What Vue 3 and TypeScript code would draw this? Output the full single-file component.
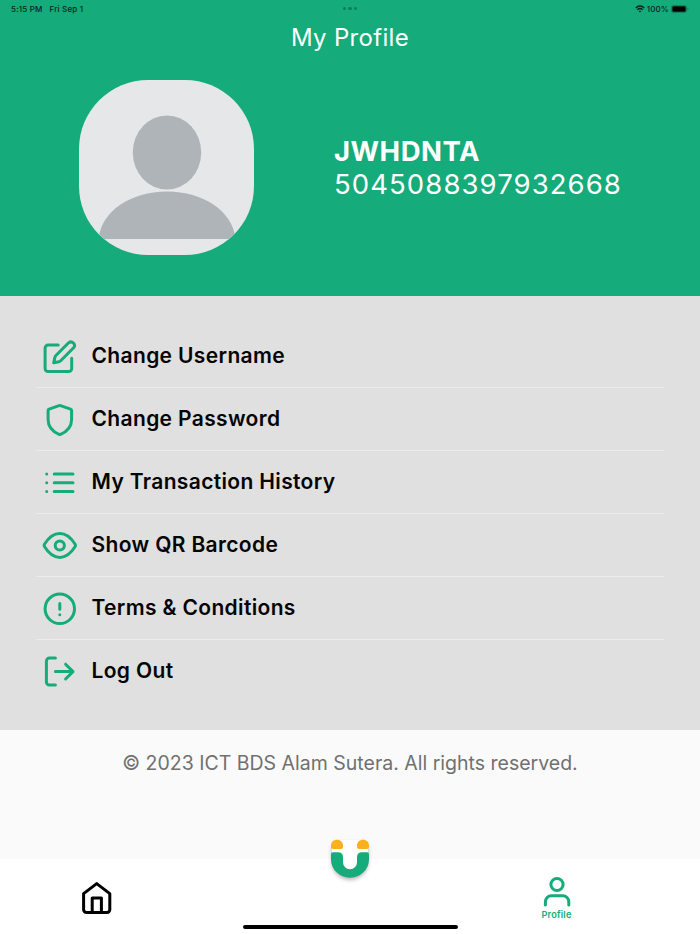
<script setup lang="ts">
interface MenuItem {
  label: string
  paths: string[]
}

const profile = { name: 'JWHDNTA', id: '5045088397932668' }

const menu: MenuItem[] = [
  {
    label: 'Change Username',
    paths: [
      'M16.2 6.1H6.1a3 3 0 0 0-3 3v20.5a3 3 0 0 0 3 3h20.6a3 3 0 0 0 3-3V19.3',
      'M26.6 3.8a3.55 3.55 0 0 1 5 5L18.7 21.7Q18 22.4 17 22.7L11.7 23.8L12.9 18.4Q13.1 17.3 13.9 16.5Z',
    ],
  },
  {
    label: 'Change Password',
    paths: ['M17.1 3.6Q17.8 3.3 18.5 3.6L28.5 7.2Q29.6 7.6 29.6 8.6V17.5C29.6 25.5 24.5 29.8 18.5 32.4Q17.8 32.7 17.1 32.4C11.2 29.8 6.1 25.5 6.1 17.5V8.6Q6.1 7.6 7.1 7.2Z'],
  },
  {
    label: 'My Transaction History',
    paths: ['M4.7 9h.01M4.7 17.8h.01M4.7 26.5h.01', 'M12.2 9H31M12.2 17.8H31M12.2 26.5H31'],
  },
  {
    label: 'Show QR Barcode',
    paths: [
      'M2.6 18.8Q1.7 17.4 2.6 16C6.6 9.5 11.7 5.4 17.8 5.4S29 9.5 33 16Q33.9 17.4 33 18.8C29 25.3 23.9 29.4 17.8 29.4S6.6 25.3 2.6 18.8Z',
      'M13.2 17.5a4.6 4.6 0 1 0 9.2 0a4.6 4.6 0 1 0-9.2 0Z',
    ],
  },
  {
    label: 'Terms & Conditions',
    paths: ['M3.1 17.8a14.7 14.7 0 1 0 29.4 0a14.7 14.7 0 1 0-29.4 0Z', 'M17.8 12.4v5.9M17.8 23.8h.01'],
  },
  {
    label: 'Log Out',
    paths: ['M13.4 4.1H7.4a3 3 0 0 0-3 3V28a3 3 0 0 0 3 3H13.4', 'M13.4 17.6H30.8M23.6 10.2L31 17.6L23.6 25'],
  },
]
</script>

<template>
  <main class="screen">
    <header class="hero">
      <div class="status">
        <div class="status-left"><span>5:15 PM</span><span>Fri Sep 1</span></div>
        <div class="dots"><i /><i /><i /></div>
        <div class="status-right">
          <svg class="wifi" width="10" height="8" viewBox="0 0 10 8">
            <path d="M.7 2.9Q5-.9 9.3 2.9M2.3 4.7Q5 2.4 7.7 4.7" fill="none" stroke="#06251b" stroke-width="1.4" />
            <path d="M3.6 6Q5 4.9 6.4 6L5 7.5Z" fill="#06251b" />
          </svg>
          <span>100%</span>
          <svg class="battery" width="18" height="8" viewBox="0 0 18 8">
            <rect x=".4" y=".4" width="15.2" height="7.2" rx="2.2" fill="none" stroke="#0b7552" stroke-width=".8" />
            <rect x="1.3" y="1.3" width="13.4" height="5.4" rx="1.3" fill="#000" />
            <path d="M16.5 2.8v2.4q1-.3 1-1.2t-1-1.2Z" fill="#0b7552" />
          </svg>
        </div>
      </div>
      <h1 class="title">My Profile</h1>
      <section class="identity">
        <div class="avatar">
          <svg width="175" height="175" viewBox="0 0 175 175">
            <ellipse cx="88" cy="72.5" rx="34.2" ry="37" fill="#aeb4b8" />
            <path d="M19.6 159C22 131 52 111.4 88 111.4S154 131 156.4 159Z" fill="#aeb4b8" />
          </svg>
        </div>
        <div class="who">
          <div class="name">{{ profile.name }}</div>
          <div class="number">{{ profile.id }}</div>
        </div>
      </section>
    </header>

    <ul class="menu">
      <li v-for="item in menu" :key="item.label" class="row">
        <svg class="icon" width="36" height="36" viewBox="0 0 36 36">
          <path v-for="d in item.paths" :key="d" :d="d" />
        </svg>
        <span class="label">{{ item.label }}</span>
      </li>
    </ul>

    <footer class="legal">© 2023 ICT BDS Alam Sutera. All rights reserved.</footer>

    <nav class="tabs">
      <a class="tab">
        <svg class="home" width="34" height="36" viewBox="80 880 34 36">
          <path d="M83.6 893.6L96.7 883.6L109.8 893.6V909.6a2.8 2.8 0 0 1-2.8 2.8H86.4a2.8 2.8 0 0 1-2.8-2.8Z" />
          <path d="M92.2 912V898H101.4V912" />
        </svg>
      </a>
      <a class="tab">
        <svg class="logo" width="60" height="60" viewBox="320 830 60 60">
          <path class="backing" d="M337 840H363Q368 841 368 849V859A18 17.5 0 0 1 332 859V849Q332 841 337 840Z" />
          <path d="M331 845.4C331 842 333.6 839.7 337 839.7S343 842 343 845.4V847Q343 848.9 341 848.9H333Q331 848.9 331 847Z" fill="#fdb01e" />
          <path d="M357 845.4C357 842 359.6 839.7 363 839.7S369 842 369 845.4V847Q369 848.9 367 848.9H359Q357 848.9 357 847Z" fill="#fdb01e" />
          <path d="M331 854.3Q331 852.3 333 852.3H338Q343 852.3 343 857.3V862.3A7 7 0 0 0 357 862.3V857.3Q357 852.3 362 852.3H367Q369 852.3 369 854.3V859.5A19 18.2 0 0 1 331 859.5Z" fill="#16ab7a" />
        </svg>
      </a>
      <a class="tab active">
        <svg class="person" width="32" height="32" viewBox="540.7 876 32 32">
          <circle cx="556.7" cy="884.5" r="6.1" />
          <path d="M545.1 905V901.7a6 6 0 0 1 6-6H562.5a6 6 0 0 1 6 6V905" />
        </svg>
        <span class="caption">Profile</span>
      </a>
      <div class="indicator" />
    </nav>
  </main>
</template>

<style>
body {
  margin: 0;
}
</style>

<style scoped>
.screen {
  width: 700px;
  height: 934px;
  display: flex;
  flex-direction: column;
  overflow: hidden;
  background: #fafafa;
  font-family: Inter, "Liberation Sans", sans-serif;
}
.hero {
  height: 296px;
  background: #15ab7a;
  color: #fff;
}
.status {
  height: 17px;
  display: grid;
  grid-template-columns: 1fr auto 1fr;
  align-items: center;
  padding: 0 11px;
  color: #06251b;
  font-size: 8px;
  font-weight: 500;
  letter-spacing: 0.18px;
}
.status-left {
  display: flex;
  gap: 7px;
}
.dots {
  display: flex;
  gap: 2px;
}
.dots i {
  width: 3.5px;
  height: 3.5px;
  border-radius: 50%;
  background: #098157;
}
.status-right {
  display: flex;
  justify-content: flex-end;
  align-items: center;
  gap: 2px;
}
.title {
  margin: 6px 0 0;
  font-size: 24px;
  line-height: 30px;
  font-weight: 400;
  letter-spacing: 0.32px;
  text-align: center;
}
.identity {
  display: flex;
  align-items: center;
  gap: 80px;
  padding: 27.4px 0 0 79px;
}
.avatar {
  width: 175px;
  height: 175px;
  border-radius: 69px;
  overflow: hidden;
  background: #e5e7e9;
}
.avatar svg {
  display: block;
}
.name,
.number {
  font-size: 27.5px;
}
.name {
  line-height: 34px;
  font-weight: 700;
  letter-spacing: 0.5px;
}
.number {
  line-height: 33px;
  letter-spacing: 1.08px;
}
.menu {
  box-sizing: border-box;
  height: 434px;
  margin: 0;
  padding: 29px 36px 0;
  list-style: none;
  background: #e0e0e0;
}
.row {
  box-sizing: border-box;
  height: 63px;
  display: flex;
  align-items: center;
  gap: 13.5px;
  padding-left: 6px;
  border-bottom: 1px solid #ebebeb;
}
.row:last-child {
  border-bottom-color: transparent;
}
.icon {
  margin-top: 2px;
  fill: none;
  stroke: #16ab7a;
  stroke-width: 3;
  stroke-linecap: round;
  stroke-linejoin: round;
}
.label {
  margin-bottom: 2px;
  font-size: 21px;
  font-weight: 600;
  letter-spacing: 0.35px;
  color: #050505;
}
.legal {
  height: 129px;
  padding-top: 20px;
  box-sizing: border-box;
  text-align: center;
  font-size: 19.5px;
  line-height: 26px;
  letter-spacing: 0;
  color: #707070;
}
.tabs {
  position: relative;
  height: 75px;
  display: grid;
  grid-template-columns: 194px 312px 101px;
  background: #fff;
}
.tab {
  display: flex;
  flex-direction: column;
  align-items: center;
}
.home {
  margin-top: 21px;
  fill: none;
  stroke: #000;
  stroke-width: 3;
  stroke-linejoin: round;
}
.logo {
  margin-top: -29px;
}
.backing {
  fill: #fff;
  filter: drop-shadow(0 3px 2px rgba(0, 0, 0, 0.32));
}
.person {
  margin-top: 17px;
  fill: none;
  stroke: #16ab7a;
  stroke-width: 3;
  stroke-linecap: round;
}
.caption {
  font-size: 9.2px;
  line-height: 13px;
  font-weight: 600;
  letter-spacing: 0.2px;
  color: #16ab7a;
}
.indicator {
  position: absolute;
  left: 242.5px;
  bottom: 5px;
  width: 215px;
  height: 4px;
  border-radius: 2px;
  background: #000;
}
</style>
